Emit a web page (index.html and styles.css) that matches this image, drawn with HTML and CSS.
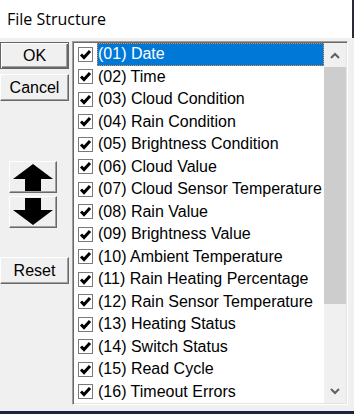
FILE: index.html
```html
<!DOCTYPE html>
<html>
<head>
<meta charset="utf-8">
<link rel="stylesheet" href="styles.css">
</head>
<body>
<div class="window">
  <div class="titlebar"><span class="title">File Structure</span></div>
  <div class="main">
    <div class="side">
      <button class="btn btn-default btn-ok">OK</button>
      <button class="btn btn-cancel">Cancel</button>
      <div class="arrows">
        <button class="arrow-btn" aria-label="Move up">
          <svg width="42" height="28" viewBox="0 0 42 28"><polygon points="21,1 41,16 29,16 29,28 13,28 13,16 1,16" fill="#000"/></svg>
        </button>
        <button class="arrow-btn" aria-label="Move down">
          <svg width="42" height="28" viewBox="0 0 42 28"><polygon points="13,0 29,0 29,12 41,12 21,27 1,12 13,12" fill="#000"/></svg>
        </button>
      </div>
      <button class="btn btn-reset">Reset</button>
    </div>
    <div class="listbox">
      <ul class="items">
        <li class="item selected"><span class="cb"></span><span class="label">(01) Date</span></li>
        <li class="item"><span class="cb"></span><span class="label">(02) Time</span></li>
        <li class="item"><span class="cb"></span><span class="label">(03) Cloud Condition</span></li>
        <li class="item"><span class="cb"></span><span class="label">(04) Rain Condition</span></li>
        <li class="item"><span class="cb"></span><span class="label">(05) Brightness Condition</span></li>
        <li class="item"><span class="cb"></span><span class="label">(06) Cloud Value</span></li>
        <li class="item"><span class="cb"></span><span class="label">(07) Cloud Sensor Temperature</span></li>
        <li class="item"><span class="cb"></span><span class="label">(08) Rain Value</span></li>
        <li class="item"><span class="cb"></span><span class="label">(09) Brightness Value</span></li>
        <li class="item"><span class="cb"></span><span class="label">(10) Ambient Temperature</span></li>
        <li class="item"><span class="cb"></span><span class="label">(11) Rain Heating Percentage</span></li>
        <li class="item"><span class="cb"></span><span class="label">(12) Rain Sensor Temperature</span></li>
        <li class="item"><span class="cb"></span><span class="label">(13) Heating Status</span></li>
        <li class="item"><span class="cb"></span><span class="label">(14) Switch Status</span></li>
        <li class="item"><span class="cb"></span><span class="label">(15) Read Cycle</span></li>
        <li class="item"><span class="cb"></span><span class="label">(16) Timeout Errors</span></li>
      </ul>
      <div class="scrollbar">
        <div class="sb-btn"><svg width="10" height="7" viewBox="0 0 10 7"><polyline points="1,6 5,2 9,6" fill="none" stroke="#606060" stroke-width="2"/></svg></div>
        <div class="sb-track"><div class="sb-thumb"></div></div>
        <div class="sb-btn"><svg width="10" height="7" viewBox="0 0 10 7"><polyline points="1,1 5,5 9,1" fill="none" stroke="#606060" stroke-width="2"/></svg></div>
      </div>
    </div>
  </div>
  <div class="bottombar"></div>
</div>
</body>
</html>
```
FILE: styles.css
```css
* { box-sizing: border-box; }
html, body { margin: 0; padding: 0; }
body { width: 354px; height: 414px; overflow: hidden; background: #f0f0f0; }
.window { width: 354px; height: 414px; display: flex; flex-direction: column; }
.titlebar {
  height: 38px; background: #fff; flex: none;
  border-right: 2px solid #2a2a3a;
  padding: 8px 0 0 7px;
  font-family: "Open Sans", "Noto Sans", sans-serif; font-size: 16px; color: #000;
}
.main { flex: 1; display: flex; padding-top: 3px; background: #f0f0f0; }
.bottombar { height: 3px; background: #1e2440; flex: none; }

.side { width: 72px; flex: none; display: flex; flex-direction: column; }
.btn {
  display: block; margin: 0; padding: 0;
  font-family: "Liberation Sans", Arial, sans-serif; font-size: 16px; color: #000;
  background: #f0f0f0;
  height: 27px; width: 69px;
  border: 1px solid; border-color: #fff #696969 #696969 #fff;
  box-shadow: inset -1px -1px 0 #a0a0a0;
}
.btn-default {
  border: 1px solid #646464;
  box-shadow: inset 1px 1px 0 #fff, inset -1px -1px 0 #696969, inset -2px -2px 0 #a0a0a0;
}
.btn-ok { margin-top: 1px; }
.btn-cancel { margin-top: 5px; }
.arrows { margin: 60px 0 0 9px; display: flex; flex-direction: column; gap: 3px; }
.arrow-btn {
  width: 48px; height: 32px; padding: 0; margin: 0;
  background: #f0f0f0; display: flex; align-items: center; justify-content: center;
  border: 1px solid; border-color: #fff #696969 #696969 #fff;
  box-shadow: inset -1px -1px 0 #a0a0a0;
}
.arrow-btn svg { display: block; }
.btn-reset { margin-top: 29px; }

.listbox {
  width: 276px; height: 364px; flex: none; background: #fff;
  border: 1px solid; border-color: #a0a0a0 #fff #fff #a0a0a0;
  box-shadow: inset 1px 1px 0 #696969, inset -1px -1px 0 #e3e3e3;
  padding: 1px 1px 1px 1px;
  display: flex;
}
.items { list-style: none; margin: 0; padding: 0; flex: 1; min-width: 0; }
.item {
  height: 22.5px; display: flex; align-items: center;
  font-family: "Liberation Sans", Arial, sans-serif; font-size: 16px; color: #000;
}
.cb {
  width: 15px; height: 15px; margin-left: 4px; margin-right: 4px; flex: none;
  border: 1px solid #7a7a7a; background: #fff;
  background-image: url("data:image/svg+xml;utf8,<svg xmlns='http://www.w3.org/2000/svg' width='13' height='13' viewBox='0 0 13 13'><polyline points='2,6.5 5,9.5 11,3' fill='none' stroke='black' stroke-width='3'/></svg>");
  background-repeat: no-repeat; background-position: center;
}
.label { flex: 1; height: 100%; display: flex; align-items: center; padding-left: 1px; white-space: nowrap; overflow: hidden; }
.selected .label { background: #0078d7; color: #fff; outline: 1px dotted #ff8728; outline-offset: -1px; }
.scrollbar { width: 22px; flex: none; display: flex; flex-direction: column; background: #f0f0f0; }
.sb-btn { height: 24px; display: flex; align-items: center; justify-content: center; }
.sb-track { flex: 1; }
.sb-thumb { height: 237px; background: #cdcdcd; }
```
